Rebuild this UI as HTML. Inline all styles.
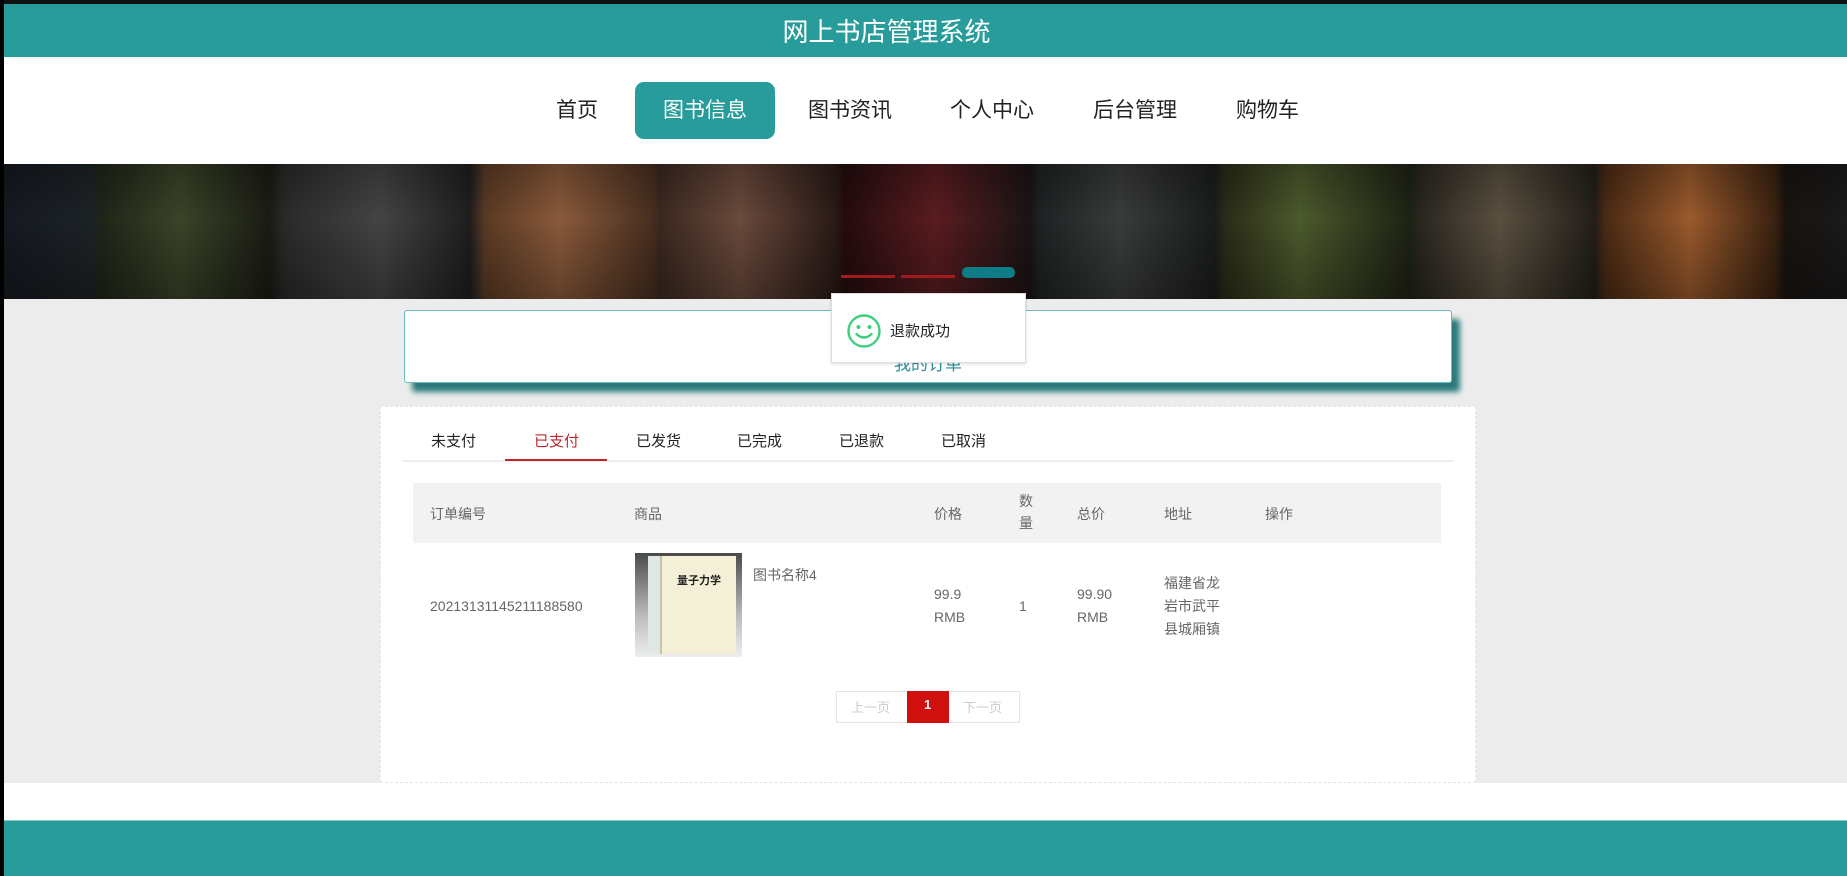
<!DOCTYPE html>
<html><head><meta charset="utf-8">
<style>
*{margin:0;padding:0;box-sizing:border-box}
body{width:1847px;height:876px;overflow:hidden;background:#ececec;font-family:"Liberation Sans","Noto Sans CJK SC",sans-serif;position:relative}
.a{position:absolute}
.t{white-space:nowrap}
</style></head><body>
<div class="a" style="left:0;top:0;width:1847px;height:4px;background:#111"></div>
<div class="a" style="left:0;top:4px;width:1847px;height:53px;background:#289c9b;box-shadow:0 2px 4px rgba(0,80,80,.3)"></div>
<div class="a t" style="left:0;width:1773px;top:15px;text-align:center;color:#fff;font-size:26px;line-height:34px">网上书店管理系统</div>
<div class="a" style="left:0;top:57px;width:1847px;height:107px;background:#fff"></div>
<div class="a" style="left:635px;top:82px;width:140px;height:57px;background:#289c9b;border-radius:9px"></div>
<div class="a t" style="top:97px;left:556px;font-size:21px;color:#222;line-height:28px">首页</div>
<div class="a t" style="top:97px;left:663px;font-size:21px;color:#fff;line-height:28px">图书信息</div>
<div class="a t" style="top:97px;left:808px;font-size:21px;color:#222;line-height:28px">图书资讯</div>
<div class="a t" style="top:97px;left:950px;font-size:21px;color:#222;line-height:28px">个人中心</div>
<div class="a t" style="top:97px;left:1093px;font-size:21px;color:#222;line-height:28px">后台管理</div>
<div class="a t" style="top:97px;left:1236px;font-size:21px;color:#222;line-height:28px">购物车</div>
<div class="a" style="left:0;top:164px;width:1847px;height:135px;background:linear-gradient(90deg,#141920 0,#1c2226 90px,#1e2518 100px,#3a4428 180px,#1a1c14 270px,#2a2a2a 285px,#444 380px,#1e1e1e 470px,#5a3a24 485px,#8a5a3a 560px,#4a3020 650px,#3a2820 660px,#6a4a3c 740px,#2a1a16 835px,#240c0e 845px,#5a1c20 935px,#1a1414 1030px,#1e2222 1040px,#3a3c3c 1120px,#1a1c1c 1215px,#2a2c18 1225px,#4c5a2c 1300px,#1e2214 1410px,#2a2620 1420px,#5a5040 1500px,#221e18 1595px,#4a2a14 1605px,#9a5a2c 1690px,#3a2210 1775px,#181410 1785px,#1a1a1a 1847px)"></div>
<div class="a" style="left:0;top:164px;width:1847px;height:135px;background:linear-gradient(180deg,rgba(0,0,0,.25),rgba(0,0,0,0) 40%,rgba(0,0,0,.3))"></div>
<div class="a" style="left:841px;top:275px;width:54px;height:3px;background:#a01c1c"></div>
<div class="a" style="left:901px;top:275px;width:54px;height:3px;background:#a01c1c"></div>
<div class="a" style="left:962px;top:267px;width:53px;height:11px;background:#0e7c86;border-radius:5px"></div>
<div class="a" style="left:404px;top:310px;width:1048px;height:73px;background:#fff;border:1px solid #6bbcbc;border-radius:3px;box-shadow:8px 9px 6px #2c7a7a"></div>
<div class="a t" style="left:404px;width:1048px;top:350px;text-align:center;color:#2a8fa0;font-size:17px">我的订单</div>
<div class="a" style="left:831px;top:293px;width:195px;height:70px;background:#fff;border:1px solid #ddd;box-shadow:0 1px 3px rgba(0,0,0,.15)"></div>
<svg class="a" style="left:846px;top:313px" width="36" height="36" viewBox="0 0 36 36"><circle cx="18" cy="18" r="15.5" fill="none" stroke="#3ecf7e" stroke-width="2.4"/><circle cx="12.5" cy="14" r="2" fill="#3ecf7e"/><circle cx="23.5" cy="14" r="2" fill="#3ecf7e"/><path d="M10.5 21 Q18 28 25.5 21" fill="none" stroke="#3ecf7e" stroke-width="2.4" stroke-linecap="round"/></svg>
<div class="a t" style="left:890px;top:320px;font-size:15px;color:#222">退款成功</div>
<div class="a" style="left:380px;top:406px;width:1096px;height:377px;background:#fff;border:1px dashed #e4e4e4"></div>
<div class="a t" style="left:431px;top:430px;font-size:15px;color:#222">未支付</div>
<div class="a t" style="left:534px;top:430px;font-size:15px;color:#c0282d">已支付</div>
<div class="a t" style="left:636px;top:430px;font-size:15px;color:#222">已发货</div>
<div class="a t" style="left:737px;top:430px;font-size:15px;color:#222">已完成</div>
<div class="a t" style="left:839px;top:430px;font-size:15px;color:#222">已退款</div>
<div class="a t" style="left:941px;top:430px;font-size:15px;color:#222">已取消</div>
<div class="a" style="left:403px;top:460px;width:1051px;height:2px;background:#eee"></div>
<div class="a" style="left:505px;top:459px;width:102px;height:2px;background:#c0282d"></div>
<div class="a" style="left:413px;top:483px;width:1028px;height:60px;background:#f2f2f2"></div>
<div style="color:#666;font-size:14px">
<div class="a t" style="left:430px;top:504px">订单编号</div>
<div class="a t" style="left:634px;top:504px">商品</div>
<div class="a t" style="left:934px;top:504px">价格</div>
<div class="a t" style="left:1019px;top:490px;line-height:22px">数<br>量</div>
<div class="a t" style="left:1077px;top:504px">总价</div>
<div class="a t" style="left:1164px;top:504px">地址</div>
<div class="a t" style="left:1265px;top:504px">操作</div>
<div class="a t" style="left:430px;top:598px">20213131145211188580</div>
<div class="a t" style="left:753px;top:565px">图书名称4</div>
<div class="a t" style="left:934px;top:583px;line-height:23px">99.9<br>RMB</div>
<div class="a t" style="left:1019px;top:598px">1</div>
<div class="a t" style="left:1077px;top:583px;line-height:23px">99.90<br>RMB</div>
<div class="a t" style="left:1164px;top:572px;line-height:23px">福建省龙<br>岩市武平<br>县城厢镇</div>
</div>
<div class="a" style="left:635px;top:553px;width:107px;height:104px;background:linear-gradient(180deg,#4a4a4a,#bbb 60%,#eee)"></div>
<div class="a" style="left:648px;top:556px;width:16px;height:96px;background:#dfe8e4"></div>
<div class="a" style="left:660px;top:556px;width:76px;height:98px;background:#f4f0d8;border-left:2px solid #c8c4a8"></div>
<div class="a t" style="left:677px;top:572px;font-size:11px;font-weight:bold;color:#222">量子力学</div>
<div class="a" style="left:836px;top:691px;width:184px;height:32px;border:1px solid #e4e4e4;background:#fff"></div>
<div class="a" style="left:907px;top:691px;width:42px;height:32px;background:#d00f0f"></div>
<div class="a t" style="left:851px;top:697px;font-size:13px;color:#ccc">上一页</div>
<div class="a t" style="left:924px;top:697px;font-size:13px;color:#fff;font-weight:bold">1</div>
<div class="a t" style="left:963px;top:697px;font-size:13px;color:#ccc">下一页</div>
<div class="a" style="left:0;top:783px;width:1847px;height:37px;background:#fff"></div>
<div class="a" style="left:0;top:820px;width:1847px;height:56px;background:#279b9a;border-top:1px solid #8cc"></div>
<div class="a" style="left:0;top:0;width:4px;height:876px;background:#000"></div>
</body></html>
